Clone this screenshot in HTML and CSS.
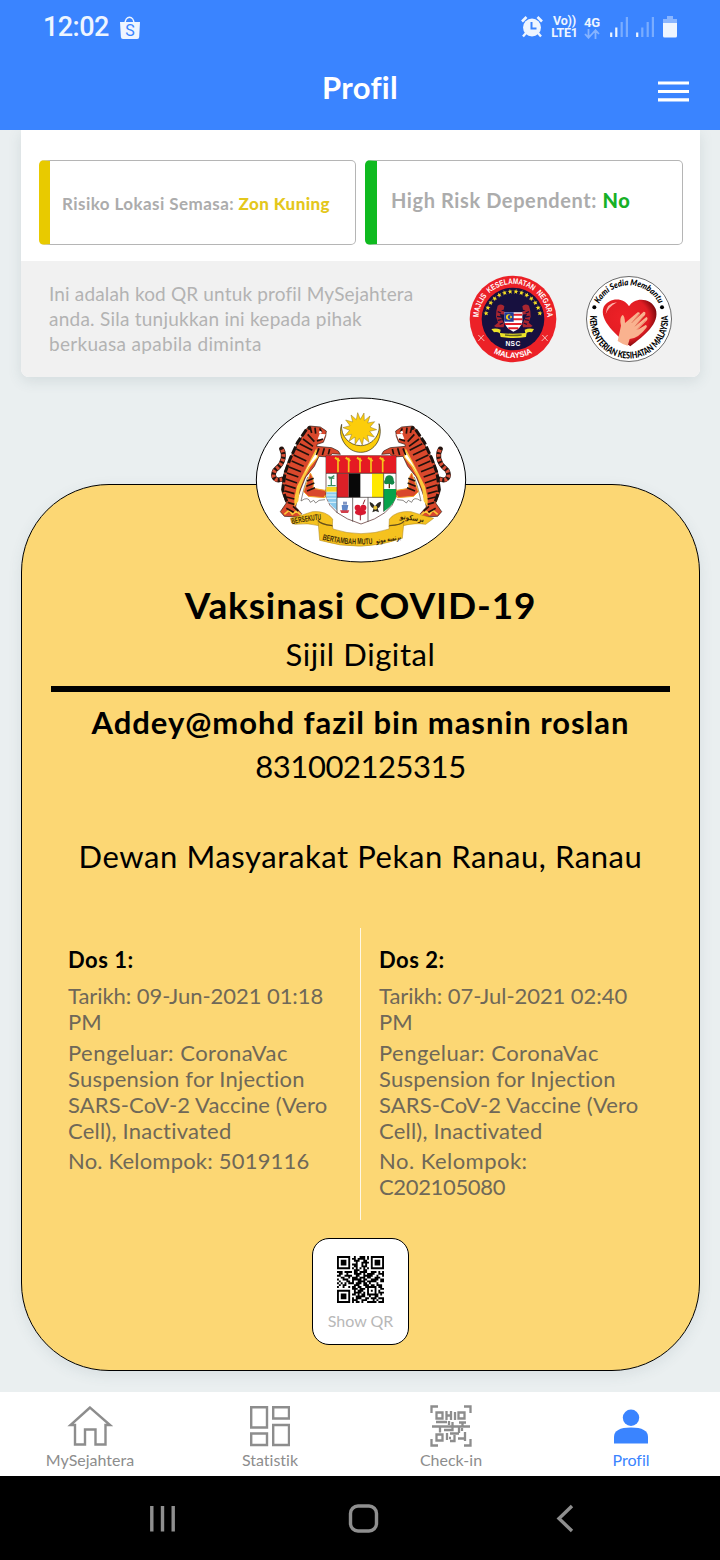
FILE: index.html
```html
<!DOCTYPE html>
<html lang="ms">
<head>
<meta charset="utf-8">
<title>Profil</title>
<link rel="stylesheet" href="styles.css">
</head>
<body>
<header class="header">
  <div class="status">
    <span class="time">12:02</span>
    <svg class="bag" width="22" height="24" viewBox="0 0 22 24"><path d="M6 8C6 -1 15 -1 15 8" fill="none" stroke="#eef5ff" stroke-width="1.5"/><path d="M1 6h20l-.8 15q-.1 2-2 2H4q-2 0-2.100-2z" fill="#eef5ff"/><text x="11" y="20" text-anchor="middle" class="bag-s">S</text></svg>
    <div class="status-right">
      <svg class="alarm" width="24" height="24" viewBox="0 0 24 24"><circle cx="12" cy="12.500" r="9" fill="#eef5ff"/><path d="M2 6.500L6.500 2M22 6.500L17.500 2" stroke="#eef5ff" stroke-width="2.600"/><path d="M6 18l-3 3.500M18 18l3 3.500" stroke="#eef5ff" stroke-width="2.400"/><path d="M11.500 7v6.500h5" fill="none" stroke="#3a84ff" stroke-width="2"/></svg>
      <span class="lte">Vo))<br>LTE1</span>
      <span class="net">4G<svg width="16" height="10" viewBox="0 0 16 10"><path d="M4.500 0v8M1 5l3.500 3.800L8 5M11.500 10V2M8 5l3.500-3.800L15 5" fill="none" stroke="#85b3ff" stroke-width="1.800"/></svg></span>
      <svg class="sig" width="18" height="20" viewBox="0 0 18 20"><path d="M1.200 15.500V20M6.300 10.500V20" stroke="#eef5ff" stroke-width="2.200"/><path d="M11.700 5V20M16.900 0V20" stroke="#7aadff" stroke-width="2.200"/></svg>
      <svg class="sig sig2" width="18" height="20" viewBox="0 0 18 20"><path d="M1.200 15.500V20" stroke="#eef5ff" stroke-width="2.200"/><path d="M6.300 10.500V20M11.700 5V20M16.900 0V20" stroke="#7aadff" stroke-width="2.200"/></svg>
      <svg class="batt" width="14" height="22" viewBox="0 0 14 22"><path d="M4 0h6v3h4v5H0V3h4z" fill="#8ab6ff"/><path d="M0 7h14v13q0 1.500-1.500 1.500h-11Q0 21.500 0 20z" fill="#eef5ff"/></svg>
    </div>
  </div>
  <div class="titlebar">
    <h1 class="title">Profil</h1>
    <svg class="menu" width="31" height="21" viewBox="0 0 31 21"><path d="M0 2h31M0 10.500h31M0 18.800h31" stroke="#fff" stroke-width="3.200"/></svg>
  </div>
</header>

<main class="main">
  <section class="profile">
    <div class="risks">
      <div class="risk risk-yellow"><span class="risk-zone">Risiko Lokasi Semasa: <b>Zon Kuning</b></span></div>
      <div class="risk risk-green"><span class="risk-dep">High Risk Dependent: <b>No</b></span></div>
    </div>
    <div class="strip">
      <p class="note">Ini adalah kod QR untuk profil MySejahtera<br><span class="wide">anda. Sila tunjukkan ini kepada pihak</span><br><span class="wider">berkuasa apabila diminta</span></p>
      <svg class="seal" width="88" height="88" viewBox="-132 -132 264 264">
        <defs><path id="star" d="M0-7.500L2-2.300L7.500-2L3.200 1.500L4.600 7L0 4L-4.600 7L-3.200 1.500L-7.500-2L-2-2.300z" fill="#f6de24"/></defs>
        <circle r="130" fill="#ec2127"/><circle r="94" fill="#17103f"/>
        <path id="nsc-top" d="M-102.500 8A103 103 0 1 1 102.500 8" fill="none"/>
        <path id="nsc-bottom" d="M-108 48A119 119 0 0 0 108 48" fill="none"/>
        <text class="nsc-arc"><textPath href="#nsc-top" startOffset="50%" text-anchor="middle" textLength="318" lengthAdjust="spacingAndGlyphs">MAJLIS&#160; KESELAMATAN&#160; NEGARA</textPath></text>
        <text class="nsc-arc"><textPath href="#nsc-bottom" startOffset="50%" text-anchor="middle" textLength="122">MALAYSIA</textPath></text>
        <g>
          <use href="#star" transform="rotate(-78) translate(0 -83)"/><use href="#star" transform="rotate(-66) translate(0 -83)"/><use href="#star" transform="rotate(-54) translate(0 -83)"/><use href="#star" transform="rotate(-42) translate(0 -83)"/><use href="#star" transform="rotate(-30) translate(0 -83)"/><use href="#star" transform="rotate(-18) translate(0 -83)"/><use href="#star" transform="rotate(-6) translate(0 -83)"/><use href="#star" transform="rotate(6) translate(0 -83)"/><use href="#star" transform="rotate(18) translate(0 -83)"/><use href="#star" transform="rotate(30) translate(0 -83)"/><use href="#star" transform="rotate(42) translate(0 -83)"/><use href="#star" transform="rotate(54) translate(0 -83)"/><use href="#star" transform="rotate(66) translate(0 -83)"/><use href="#star" transform="rotate(78) translate(0 -83)"/>
        </g>
        <g id="nsc-cat"><path d="M-46-40q12-8 20 2l-2 10-8 2 14 6-2 7-16-2 6 14 8 16-2 10h-22l-7-4 12-10-6-18q0-20 5-33z" fill="#a92630"/><path d="M-46-22l10 4M-48-8l12 2M-46 4l12-2M-40 16l10-4" stroke="#17103f" stroke-width="4"/></g>
        <use href="#nsc-cat" transform="translate(2) scale(-1 1)"/>
        <path d="M-26-20H28V8Q24 28 1 38Q-22 28-26 8z" fill="#fff"/>
        <path d="M-25-13H27M-26 1H28M-24 15H26M-14 28H16" stroke="#e5202b" stroke-width="6"/>
        <path d="M-26-20H2V8H-26z" fill="#203b98"/><circle cx="-13" cy="-6" r="8" fill="#fede1c"/><circle cx="-10" cy="-6" r="6" fill="#203b98"/><circle cx="-6" cy="-6" r="3" fill="#fede1c"/>
        <path d="M-65 30q14-4 28 2l-2 10q38 4 76 0l-2-10q14-6 28-2l-6 10q-12-2-16 2l-2 12q-38 6-76 0l-3-12q-8-4-17-2z" fill="#ece229"/><path d="M-24 48q24 3 50 0" fill="none" stroke="#67661d" stroke-width="4"/>
        <path d="M-104 48l18 18M-88 48l-16 18M104 48l-18 18M88 48l16 18" stroke="#f4bcb6" stroke-width="3"/>
        <text class="nsc" y="80" text-anchor="middle">NSC</text>
      </svg>
      <svg class="seal seal2" width="86" height="88" viewBox="-129 -132 258 264">
        <defs><radialGradient id="heart" cx=".4" cy=".4" r=".65"><stop offset="0" stop-color="#ef2127"/><stop offset=".7" stop-color="#e11d23"/><stop offset="1" stop-color="#650408"/></radialGradient></defs>
        <circle r="127.500" fill="#fff" stroke="#222" stroke-width="2"/>
        <path id="moh-top" d="M-94 -36A100.500 100.500 0 0 1 94 -36" fill="none"/>
        <path id="moh-bottom" d="M-115 -20A117 117 0 1 0 115 -20" fill="none"/>
        <text class="moh-script"><textPath href="#moh-top" startOffset="50%" text-anchor="middle" textLength="222" lengthAdjust="spacingAndGlyphs">Kami Sedia Membantu</textPath></text>
        <text class="moh-arc"><textPath href="#moh-bottom" startOffset="50%" text-anchor="middle" textLength="392" lengthAdjust="spacingAndGlyphs">KEMENTERIAN KESIHATAN MALAYSIA</textPath></text>
        <circle cx="-104" cy="-35" r="6"/><circle cx="99" cy="-35" r="6"/>
        <path d="M0-38C-14-66-60-66-76-36C-92 4-34 52 4 82C46 50 94 12 80-30C66-66 14-66 0-38z" fill="url(#heart)"/>
        <path d="M-70-14Q-68-48-36-50Q-62-36-70-14z" fill="#ffb1a8"/>
        <path d="M-34 66L-24 20Q-30-2-20-12Q-13-12-12 12L26-20Q34-22 32-14L10 10L44-22Q52-22 48-12L20 20L52-6Q58-4 54 4L26 32L50 18Q56 20 52 26Q28 58 2 60L-4 80Q-20 76-34 66z" fill="#f9b28f"/>
        <path d="M8 12L30-15M18 22L44-9M24 32L50 5" stroke="#d96c4f" stroke-width="2"/>
      </svg>
    </div>
  </section>

  <section class="cert">
    <svg class="crest" width="212" height="167" viewBox="30 22 636 501">
      <ellipse cx="348" cy="271" rx="314" ry="246" fill="#fff" stroke="#000" stroke-width="3"/>
      <path d="M290 104C276 142 306 188 347 188C390 188 416 142 402 102C408 138 378 168 347 168C314 168 286 140 290 104z" fill="#fccd0b" stroke="#2d2408" stroke-width="2"/>
      <path d="M338 69l8 20 11-19 1 23 17-14-7 21 21-4-14 16 20 8-21 5 14 17-21-5 5 21-16-14-4 23-9-21-13 19v-23l-18 13 8-21-21 4 15-16-20-8 21-6-13-17 21 6-5-21 16 14z" fill="#fccd0b" stroke="#8f7420" stroke-width="1.500"/>
      <g id="tiger">
        <path d="M112 268C84 280 78 250 96 236C116 218 120 196 110 178" fill="none" stroke="#25140f" stroke-width="15" stroke-linecap="round"/>
        <path d="M112 268C84 280 78 250 96 236C116 218 120 196 110 178" fill="none" stroke="#dd5138" stroke-width="12" stroke-dasharray="8 6"/>
        <path d="M188 262L176 300L168 334Q190 318 196 338L206 332L212 340L222 332L240 330" fill="#fff" stroke="#55504c" stroke-width="2"/>
        <path d="M196 250Q208 268 204 296L240 302L246 314L238 324L190 320L176 306z" fill="#d9482c" stroke="#f3a52a" stroke-width="3"/>
        <path d="M184 118L193 109L226 112L244 124L242 140L235 158L216 164L215 170L260 174L280 184L286 194L262 192L250 202L222 200L208 230L182 262L168 296L156 330L152 352L170 372L162 382L118 380L106 366L124 340L112 310Q108 250 140 196Q158 160 184 118z" fill="#d9482c" stroke="#28150e" stroke-width="2"/>
        <path d="M214 176L220 202L196 232L178 264L164 300L160 334L148 352L148 326L156 290Q184 234 214 176z" fill="#fbc83a"/>
        <path d="M214 188L216 202L190 232L175 258L163 288Q182 238 214 188z" fill="#fff"/>
        <path d="M224 132l18 2-8 18-16-4z" fill="#fff"/>
        <path d="M118 374l14-12 10 12 12-10 14 12M240 300l10 12-12 10" fill="none" stroke="#fbc83a" stroke-width="5"/>
        <path d="M184 120L158 158L136 206L120 250L113 300L126 338" fill="none" stroke="#1b120e" stroke-width="9" stroke-dasharray="24 6"/>
        <path d="M188 134l20 22M174 148l30 22M164 162l38 20M154 178l38 18M146 196l38 18M140 214l36 16M132 232l36 14M126 250l34 12M122 268l34 12M120 286l32 10M120 304l28 8M124 322l24 6M128 338l20 6M206 266l-20 8M208 280l-24 10M210 294l-24 10M222 176l-8 20M238 176l-6 20M254 178l-4 16M124 356l22 12M144 350l16 14M210 114l2 18M224 116l6 12M234 148l-18 6M196 116l4 14" stroke="#1f110c" stroke-width="5" fill="none"/>
        <circle cx="226" cy="128" r="4" fill="#fff"/><circle cx="193" cy="115" r="6" fill="#1d1410"/>
      </g>
      <use href="#tiger" transform="translate(696) scale(-1 1)"/>
      <path d="M243 198H453V322Q438 376 348 403Q258 376 243 322z" fill="#fff" stroke="#4b1d1a" stroke-width="2"/>
      <path d="M243 198H453V251H243z" fill="#e51b23"/>
      <g fill="none" stroke="#f5c51a" stroke-width="5"><path d="M279 204V248M311 204V248M345 204V248M378 204V248M413 204V248"/><path d="M270 204l14 10M302 204l14 10M336 204l14 10M369 204l14 10M404 204l14 10" stroke-width="6"/></g>
      <path d="M276 251h35v72h-35z" fill="#dc2027"/><path d="M311 251h35v72h-35z" fill="#080808"/><path d="M381 251h35v72h-35z" fill="#ffe800"/>
      <path d="M244 292h32v14h-32z" fill="#f7d423"/><path d="M244 308h32v54Q250 344 244 320z" fill="#8bcbed"/><path d="M244 316h30M244 326h30M248 338h26" stroke="#dff3fc" stroke-width="3"/>
      <path d="M259 264v24M248 288h24M250 262l18 4M268 258l-16 10" stroke="#388d61" stroke-width="4"/>
      <path d="M416 298H453V322Q446 346 416 366z" fill="#08a34b"/><path d="M433 274v22" stroke="#5c3a17" stroke-width="4"/><circle cx="433" cy="270" r="13" fill="#138746"/><circle cx="424" cy="277" r="7" fill="#138746"/><circle cx="441" cy="278" r="7" fill="#138746"/>
      <path d="M243 251H453M276 323H416M276 251V370M323 323V396M369 323V396M416 251V366" stroke="#302927" stroke-width="2" fill="none"/>
      <g fill="#d81930"><circle cx="338" cy="354" r="9"/><circle cx="355" cy="354" r="9"/><circle cx="346" cy="366" r="11"/><circle cx="356" cy="368" r="7"/><circle cx="337" cy="368" r="7"/></g><path d="M346 376v16M354 344l6-14" stroke="#8f1e2c" stroke-width="3"/>
      <path d="M290 346h20l-4 20h-14z" fill="#5f86c6"/><path d="M285 362h28l-4 8h-20z" fill="#d33d49"/><path d="M294 336h12v9h-12z" fill="#8196c3"/>
      <path d="M374 336q10 4 16 14q6-12 18-14q0 16-10 20l4 12-10-4-10 4 4-12q-12-4-12-20z" fill="#2b2922"/><circle cx="391" cy="354" r="6" fill="#e6c33a"/>
      <path d="M136 386Q174 376 202 366Q242 362 263 388L262 412L232 410Q188 398 150 404L140 400z" fill="#f5c21f" stroke="#a8811b" stroke-width="1.500"/>
      <path d="M566 386Q528 376 498 366Q454 362 433 388L432 412L466 410Q510 398 542 404z" fill="#f5c21f" stroke="#a8811b" stroke-width="1.500"/>
      <path d="M219 392Q226 404 262 408L264 418Q348 446 432 418L433 408Q470 406 477 394L472 446Q350 490 224 452z" fill="#f5c21f" stroke="#a8811b" stroke-width="1.500"/>
      <path d="M219 392Q226 404 262 408M477 394Q470 406 433 408" stroke="#66501b" stroke-width="4" fill="none"/>
      <path id="rib-l" d="M142 404Q180 394 232 390" fill="none"/><path id="rib-c" d="M232 450Q310 470 388 462" fill="none"/>
      <text class="motto"><textPath href="#rib-l" textLength="88" lengthAdjust="spacingAndGlyphs">BERSEKUTU</textPath></text>
      <text class="motto"><textPath href="#rib-c" textLength="152" lengthAdjust="spacingAndGlyphs">BERTAMBAH MUTU</textPath></text>
      <text class="motto jawi" transform="rotate(-10 430 450)" x="430" y="455" text-anchor="middle" textLength="76" lengthAdjust="spacingAndGlyphs">برتمبه موتو</text>
      <text class="motto jawi" transform="rotate(8 500 392)" x="500" y="392" text-anchor="middle" textLength="72" lengthAdjust="spacingAndGlyphs">برسكوتو</text>
    </svg>
    <h2 class="cert-title">Vaksinasi COVID-19</h2>
    <p class="cert-sub">Sijil Digital</p>
    <hr class="rule">
    <p class="holder">Addey@mohd fazil bin masnin roslan</p>
    <p class="holder-id">831002125315</p>
    <p class="venue">Dewan Masyarakat Pekan Ranau, Ranau</p>
    <div class="doses">
      <div class="dose">
        <h3>Dos 1:</h3>
        <p class="date">Tarikh: 09-Jun-2021 01:18<br>PM</p>
        <p class="maker"><span class="wide">Pengeluar: CoronaVac</span><br><span class="mid">Suspension for Injection</span><br>SARS-CoV-2 Vaccine (Vero<br><span class="mid">Cell), Inactivated</span></p>
        <p class="batch">No. Kelompok: 5019116</p>
      </div>
      <div class="dose">
        <h3>Dos 2:</h3>
        <p class="date">Tarikh: 07-Jul-2021 02:40<br>PM</p>
        <p class="maker"><span class="wide">Pengeluar: CoronaVac</span><br><span class="mid">Suspension for Injection</span><br>SARS-CoV-2 Vaccine (Vero<br><span class="mid">Cell), Inactivated</span></p>
        <p class="batch"><span class="wide">No. Kelompok:</span><br><span class="code">C202105080</span></p>
      </div>
    </div>
    <div class="qr">
      <svg width="47" height="47" viewBox="0 0 25 25"><path stroke="#000" d="M0 .5h7m2 0h1m2 0h3m1 0h1m1 0h7M0 1.500h1m5 0h1m1 0h2m1 0h4m1 0h1m1 0h1m5 0h1M0 2.500h1m1 0h3m1 0h1m2 0h3m2 0h2m2 0h1m1 0h3m1 0h1M0 3.500h1m1 0h3m1 0h1m3 0h1m2 0h4m1 0h1m1 0h3m1 0h1M0 4.500h1m1 0h3m1 0h1m1 0h3m2 0h1m1 0h1m2 0h1m1 0h3m1 0h1M0 5.500h1m5 0h1m2 0h2m2 0h3m2 0h1m5 0h1M0 6.500h7m1 0h1m1 0h1m1 0h1m1 0h1m1 0h1m1 0h7M9 7.500h3m2 0h2M0 8.500h3m1 0h4m1 0h2m1 0h4m2 0h3m1 0h1m1 0h1M1 9.500h2m2 0h1m3 0h4m1 0h1m1 0h4m2 0h3M0 10.500h2m2 0h4m2 0h2m2 0h5m2 0h1m2 0h1M2 11.500h2m2 0h1m1 0h3m1 0h3m1 0h2m2 0h3M0 12.500h1m2 0h3m2 0h5m1 0h2m2 0h4m1 0h2M1 13.500h1m3 0h2m1 0h1m2 0h4m1 0h5m2 0h2M0 14.500h1m1 0h1m1 0h1m1 0h3m1 0h3m1 0h2m1 0h1m3 0h1M1 15.500h1m1 0h2m4 0h3m2 0h3m1 0h2m1 0h3M0 16.500h1m2 0h1m2 0h1m1 0h2m1 0h2m2 0h6m1 0h2M8 17.500h3m1 0h3m1 0h1m3 0h1m2 0h2M0 18.500h7m2 0h1m1 0h3m2 0h1m1 0h1m1 0h1m1 0h1M0 19.500h1m5 0h1m2 0h4m1 0h1m1 0h1m3 0h1m1 0h3M0 20.500h1m1 0h3m1 0h1m1 0h2m1 0h1m1 0h2m1 0h6m1 0h1M0 21.500h1m1 0h3m1 0h1m3 0h5m2 0h1m2 0h2M0 22.500h1m1 0h3m1 0h1m1 0h1m1 0h3m2 0h2m1 0h3m1 0h3M0 23.500h1m5 0h1m1 0h3m2 0h3m3 0h1m1 0h1m2 0h1M0 24.500h7m1 0h1m1 0h2m1 0h1m2 0h5m1 0h3"/></svg>
      <span>Show QR</span>
    </div>
  </section>
</main>

<nav class="tabs">
  <a class="tab"><svg width="46" height="42" viewBox="0 0 46 42"><path d="M23 2.500L3.500 20H8V39.500H18V24.500H28.500V39.500H38.500V20H43z" fill="none" stroke="#8d8d8d" stroke-width="2.400"/></svg><span>MySejahtera</span></a>
  <a class="tab"><svg width="40" height="42" viewBox="0 0 40 42"><path d="M1.200 2.200H17V22.500H1.200zM23.200 2.200H39V13.500H23.200zM1.200 28.500H17V40H1.200zM23.200 20H39V40H23.200z" fill="none" stroke="#8d8d8d" stroke-width="2.400"/></svg><span>Statistik</span></a>
  <a class="tab tab-scan"><svg width="42" height="42" viewBox="0 0 42 42"><path d="M1.500 8V1.500H8M34 1.500H40.500V8M1.500 34V40.500H8M34 40.500H40.500V34M2 21.500H40M6.500 7.500h6v6h-6zM28.500 7.500h6v6h-6zM6.500 29.500h6v6h-6zM16.500 6v9M16.500 10.500h5M21 6v9M25 7v8M6 17h11M19 16v4M22.500 17v8H14M10 22v5.500M29 17.500h7M32.500 17.500v4M29 22v6M17 28v7M19 33h2M20 28.500h9M24.500 30v6H20M28 33.500h7M35 27v9M32 23v3" fill="none" stroke="#8d8d8d" stroke-width="2.300"/></svg><span>Check-in</span></a>
  <a class="tab tab-on"><svg width="36" height="42" viewBox="0 0 36 42"><circle cx="18" cy="12.800" r="8.200" fill="#3a84ff"/><path d="M1 38.500V32Q1 22.500 18 22.500T35 32V38.500z" fill="#3a84ff"/></svg><span>Profil</span></a>
</nav>
<div class="sysnav">
  <svg width="720" height="84" viewBox="0 0 720 84"><g fill="none" stroke="#8f8f8f" stroke-width="3.400"><path d="M151.800 30V55.500M162.500 30V55.500M173.200 30V55.500"/><rect x="350.500" y="30" width="26" height="25" rx="7.500"/><path d="M572 30L559 42.500L572 55"/></g></svg>
</div>
</body>
</html>
```
FILE: styles.css
```css
* { box-sizing: border-box; margin: 0; padding: 0; }
body { width: 720px; height: 1560px; overflow: hidden; display: flex; flex-direction: column; background: #eaeff0; font-family: Lato, sans-serif; font-variant-ligatures: none; color: #000; }
svg { display: block; flex: none; }

.header { height: 130px; background: #3a84ff; color: #fff; position: relative; z-index: 1; }
.status { height: 54px; display: flex; align-items: center; padding: 0 43px 0 43px; font-family: Roboto, sans-serif; color: #eef5ff; }
.time { font-size: 27px; font-weight: 500; line-height: 54px; letter-spacing: -.55px; }
.bag { margin-left: 10px; margin-top: 1px; }
.bag-s { font: 16px Roboto, sans-serif; fill: #3a84ff; }
.status-right { margin-left: auto; display: flex; align-items: center; }
.lte { margin-left: 7px; font-size: 12.500px; line-height: 12px; font-weight: 700; text-align: center; width: 27px; white-space: nowrap; letter-spacing: -.2px; }
.net { margin-left: 6px; width: 17px; font-size: 13px; line-height: 13px; font-weight: 700; white-space: nowrap; letter-spacing: -.3px; }
.sig { margin-left: 9px; }
.sig2 { margin-left: 8px; }
.batt { margin-left: 9px; }
.titlebar { height: 76px; display: grid; grid-template-columns: 1fr auto 1fr; align-items: center; padding: 0 31px; }
.title { grid-column: 2; font-size: 31px; line-height: 40px; margin-top: -11px; letter-spacing: .3px; }
.menu { justify-self: end; margin-top: -2px; }

.main { height: 1262px; padding: 0 20px 0 21px; }
.profile { height: 247px; background: #fff; border-radius: 0 0 8px 8px; box-shadow: 0 4px 14px rgba(60, 90, 100, .13); overflow: hidden; }
.risks { height: 131px; padding: 30px 17px 0 18px; display: grid; grid-template-columns: 317px 318px; gap: 9px; }
.risk { height: 85px; border: 1px solid #b5b5b5; border-radius: 5px; display: flex; align-items: center; color: #acacac; white-space: nowrap; }
.risk-yellow { border-left: 11px solid #e8ca00; padding: 2px 0 0 12px; }
.risk-green { border-left: 12px solid #0fba1f; padding: 0 0 5px 14px; }
.risk-zone { font-size: 17px; font-weight: 700; letter-spacing: .43px; }
.risk-zone b { color: #e4c71c; }
.risk-dep { font-size: 20px; font-weight: 700; letter-spacing: .6px; }
.risk-dep b { color: #17b027; }
.strip { height: 116px; background: #f1f1f1; display: flex; padding-left: 28px; }
.note { width: 420px; padding-top: 20px; font-size: 19px; line-height: 25px; color: #b3b3b3; white-space: nowrap; letter-spacing: .16px; }
.note .wide { letter-spacing: .24px; }
.note .wider { letter-spacing: .3px; }
.seal { margin-top: 14px; }
.seal2 { margin-left: 29px; }
.nsc-arc { font: 700 24px "Liberation Sans", sans-serif; fill: #fff; }
.nsc { font: 700 20px "Liberation Sans", sans-serif; fill: #fff; letter-spacing: 1px; }
.moh-script { font: italic 900 26px Lato, sans-serif; }
.moh-arc { font: 900 28px Lato, sans-serif; }

.cert { position: relative; margin-top: 107px; height: 887px; border: 1px solid #000; border-radius: 88px; background: #fcd774; padding: 96px 29px 0; display: flex; flex-direction: column; text-align: center; box-shadow: 0 4px 14px rgba(60, 90, 100, .1); }
.crest { position: absolute; left: 233px; top: -88px; }
.motto { font: 700 25px "Liberation Sans", sans-serif; fill: #3d2b08; }
.jawi { font: 700 22px "DejaVu Sans", sans-serif; }
.cert-title { font-size: 37px; line-height: 48px; letter-spacing: .88px; }
.cert-sub { font-size: 31px; line-height: 44px; margin-top: 3px; letter-spacing: .59px; }
.rule { height: 6px; border: 0; background: #000; margin-top: 10px; }
.holder { font-size: 31px; line-height: 44px; font-weight: 700; margin-top: 8px; white-space: nowrap; letter-spacing: .96px; }
.holder-id { font-size: 31px; line-height: 44px; letter-spacing: -.45px; }
.venue { font-size: 31px; line-height: 44px; margin-top: 46px; white-space: nowrap; letter-spacing: .58px; }
.doses { margin-top: 50px; height: 292px; display: grid; grid-template-columns: 310px 1fr; text-align: left; }
.dose { padding: 18px 0 0 17px; font-size: 22px; line-height: 26px; color: #6f6858; white-space: nowrap; }
.dose + .dose { padding-left: 18px; }
.dose:first-child { border-right: 1px solid #fff8e4; }
.dose h3 { font-size: 22px; color: #000; padding-top: 1px; margin-bottom: 10px; letter-spacing: .5px; }
.date { letter-spacing: -.06px; }
.maker { margin-top: 5px; letter-spacing: .12px; }
.batch { margin-top: 4px; letter-spacing: .2px; }
.dose .wide { letter-spacing: .48px; }
.dose .mid { letter-spacing: .22px; }
.dose .code { letter-spacing: -.35px; }
.qr { align-self: center; margin-top: 18px; width: 97px; height: 107px; border: 1px solid #000; border-radius: 17px; background: #fff; padding-top: 17px; display: flex; flex-direction: column; align-items: center; font-size: 16px; line-height: 20px; color: #b8b8b8; }
.qr span { margin-top: 8px; }

.tabs { height: 84px; background: #fff; display: grid; grid-template-columns: repeat(4, 1fr); }
.tab { display: flex; flex-direction: column; align-items: center; padding-top: 13px; font-size: 16px; line-height: 20px; color: #8d8d8d; }
.tab span { margin-top: 3px; }
.tab-scan, .tab-on { padding-left: 2px; }
.tab-on { color: #3a84ff; }
.sysnav { height: 84px; background: #000; }
```
